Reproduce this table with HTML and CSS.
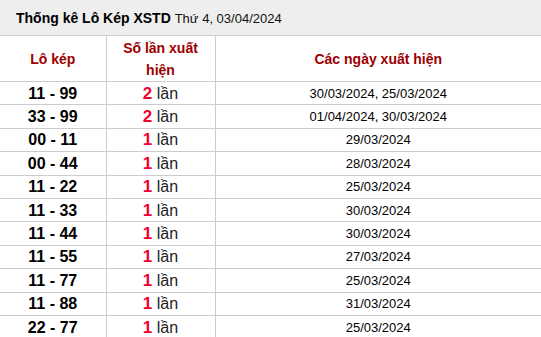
FILE: index.html
```html
<!DOCTYPE html>
<html>
<head>
<meta charset="utf-8">
<link rel="stylesheet" href="styles.css">
</head>
<body>
<div class="box">
  <div class="title"><b>Thống kê Lô Kép XSTD</b> <span class="date">Thứ 4, 03/04/2024</span></div>
  <table class="tbl">
    <colgroup><col class="c1"><col class="c2"><col class="c3"></colgroup>
    <thead>
      <tr><th>Lô kép</th><th>Số lần xuất<br>hiện</th><th>Các ngày xuất hiện</th></tr>
    </thead>
    <tbody>
      <tr><td class="pair">11 - 99</td><td class="cnt"><b>2</b> lần</td><td class="days">30/03/2024, 25/03/2024</td></tr>
      <tr><td class="pair">33 - 99</td><td class="cnt"><b>2</b> lần</td><td class="days">01/04/2024, 30/03/2024</td></tr>
      <tr><td class="pair">00 - 11</td><td class="cnt"><b>1</b> lần</td><td class="days">29/03/2024</td></tr>
      <tr><td class="pair">00 - 44</td><td class="cnt"><b>1</b> lần</td><td class="days">28/03/2024</td></tr>
      <tr><td class="pair">11 - 22</td><td class="cnt"><b>1</b> lần</td><td class="days">25/03/2024</td></tr>
      <tr><td class="pair">11 - 33</td><td class="cnt"><b>1</b> lần</td><td class="days">30/03/2024</td></tr>
      <tr><td class="pair">11 - 44</td><td class="cnt"><b>1</b> lần</td><td class="days">30/03/2024</td></tr>
      <tr><td class="pair">11 - 55</td><td class="cnt"><b>1</b> lần</td><td class="days">27/03/2024</td></tr>
      <tr><td class="pair">11 - 77</td><td class="cnt"><b>1</b> lần</td><td class="days">25/03/2024</td></tr>
      <tr><td class="pair">11 - 88</td><td class="cnt"><b>1</b> lần</td><td class="days">31/03/2024</td></tr>
      <tr><td class="pair">22 - 77</td><td class="cnt"><b>1</b> lần</td><td class="days">25/03/2024</td></tr>
    </tbody>
  </table>
</div>
</body>
</html>
```
FILE: styles.css
```css
html, body {
  margin: 0;
  padding: 0;
  background: #fff;
  font-family: "Liberation Sans", Arial, sans-serif;
  color: #000;
}
.box {
  width: 541px;
}
.title {
  height: 36px;
  box-sizing: border-box;
  background: #eeeeee;
  border-bottom: 1px solid #cccccc;
  padding: 0 0 0 16px;
  font-size: 14px;
  line-height: 36px;
  color: #000;
}
.title .date {
  font-size: 13px;
  color: #111;
}
.tbl {
  width: 541px;
  border-collapse: collapse;
  table-layout: fixed;
}
.c1 { width: 106px; }
.c2 { width: 109px; }
.c3 { width: 326px; }
.tbl th, .tbl td {
  border-bottom: 1px solid #cccccc;
  border-left: 1px solid #cccccc;
  padding: 0;
  text-align: center;
}
.tbl th:first-child, .tbl td:first-child {
  border-left: none;
}
.tbl th {
  height: 45px;
  font-size: 14px;
  line-height: 22px;
  font-weight: bold;
  color: #9c0000;
}
.tbl td {
  height: 21.4px;
  padding-top: 1px;
  line-height: 20px;
}
.pair {
  font-size: 16px;
  font-weight: bold;
  color: #000;
}
.cnt {
  font-size: 16px;
  color: #222;
}
.cnt b {
  color: #f0002f;
  font-size: 17px;
}
.days {
  font-size: 13px;
  color: #000;
}
```
